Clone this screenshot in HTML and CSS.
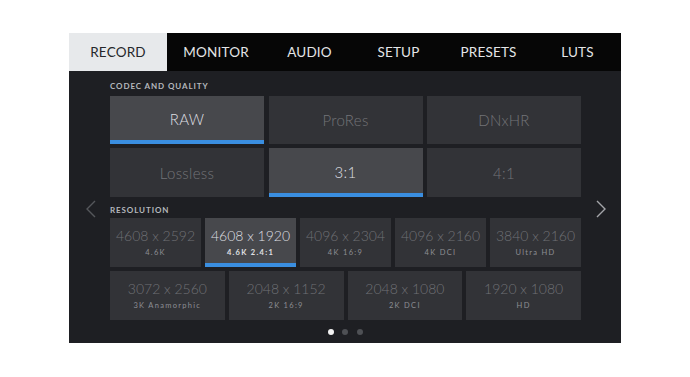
FILE: index.html
```html
<!DOCTYPE html>
<html lang="en">
  <head>
    <meta charset="UTF-8" />
    <meta name="viewport" content="width=device-width, initial-scale=1.0" />
    <title>Record Settings</title>
    <link rel="stylesheet" href="styles.css">
  </head>
  <body>
    <div class="screen">
      <div class="tabs">
        <div class="tab active">RECORD</div>
        <div class="tab">MONITOR</div>
        <div class="tab">AUDIO</div>
        <div class="tab">SETUP</div>
        <div class="tab">PRESETS</div>
        <div class="tab">LUTS</div>
      </div>

      <div class="content">
        <div class="nav nav-left">
          <svg width="11" height="18" viewBox="0 0 11 18"><polyline points="10,1 2,9 10,17" fill="none" stroke="currentColor" stroke-width="1.4"/></svg>
        </div>

        <div class="main">
          <div class="section-label">CODEC AND QUALITY</div>
          <div class="codec-grid">
            <div class="option selected">RAW</div>
            <div class="option">ProRes</div>
            <div class="option">DNxHR</div>
            <div class="option">Lossless</div>
            <div class="option selected">3:1</div>
            <div class="option">4:1</div>
          </div>

          <div class="section-label res-label">RESOLUTION</div>
          <div class="res-grid res-five">
            <div class="res"><span class="res-size">4608 x 2592</span><span class="res-name">4.6K</span></div>
            <div class="res selected"><span class="res-size">4608 x 1920</span><span class="res-name">4.6K 2.4:1</span></div>
            <div class="res"><span class="res-size">4096 x 2304</span><span class="res-name">4K 16:9</span></div>
            <div class="res"><span class="res-size">4096 x 2160</span><span class="res-name">4K DCI</span></div>
            <div class="res"><span class="res-size">3840 x 2160</span><span class="res-name">Ultra HD</span></div>
          </div>
          <div class="res-grid res-four">
            <div class="res"><span class="res-size">3072 x 2560</span><span class="res-name">3K Anamorphic</span></div>
            <div class="res"><span class="res-size">2048 x 1152</span><span class="res-name">2K 16:9</span></div>
            <div class="res"><span class="res-size">2048 x 1080</span><span class="res-name">2K DCI</span></div>
            <div class="res"><span class="res-size">1920 x 1080</span><span class="res-name">HD</span></div>
          </div>

          <div class="dots">
            <span class="dot on"></span>
            <span class="dot"></span>
            <span class="dot"></span>
          </div>
        </div>

        <div class="nav nav-right">
          <svg width="11" height="18" viewBox="0 0 11 18"><polyline points="1,1 9,9 1,17" fill="none" stroke="currentColor" stroke-width="1.4"/></svg>
        </div>
      </div>
    </div>
  </body>
</html>
```

FILE: styles.css
```css
body {
  margin: 0;
  background: #ffffff;
  font-family: Lato, "Open Sans", sans-serif;
}
.screen {
  width: 552px;
  height: 310px;
  margin: 33px 0 0 69px;
  background: #1e1f23;
  display: flex;
  flex-direction: column;
}
.tabs {
  display: grid;
  grid-template-columns: 98px 98px 89px 89px 91px 87px;
  height: 38px;
  background: #060606;
}
.tab {
  display: flex;
  align-items: center;
  justify-content: center;
  color: #e4e5e7;
  font-size: 13.5px;
  letter-spacing: 0.2px;
}
.tab.active {
  background: #e7e9eb;
  color: #25272a;
}
.content {
  flex: 1;
  display: grid;
  grid-template-columns: 41px 471px 40px;
}
.nav {
  display: flex;
  align-items: center;
  justify-content: center;
  padding-top: 3px;
}
.nav-left {
  color: #55575b;
  padding-left: 2px;
}
.nav-right {
  color: #a4a5a9;
}
.main {
  padding-top: 10px;
  display: flex;
  flex-direction: column;
}
.section-label {
  font-size: 8px;
  line-height: 10px;
  font-weight: 700;
  letter-spacing: 0.9px;
  color: #b5b8bd;
  margin-bottom: 4.5px;
}
.res-label {
  margin-top: 8px;
  margin-bottom: 3px;
}
.codec-grid {
  display: grid;
  grid-template-columns: repeat(3, 1fr);
  grid-auto-rows: 48.75px;
  gap: 4px 4.5px;
}
.option {
  display: flex;
  align-items: center;
  justify-content: center;
  background: #323337;
  color: #727378;
  font-size: 15px;
  font-weight: 300;
  letter-spacing: 0.3px;
}
.option.selected,
.res.selected {
  background: #47484c;
  color: #dedfe1;
  border-bottom: 4px solid #3a8ee0;
}
.option.selected {
  padding-top: 3px;
}
.res-grid {
  display: grid;
  gap: 4px;
  height: 48.75px;
}
.res-five {
  grid-template-columns: repeat(5, 1fr);
  margin-bottom: 4.5px;
}
.res-four {
  grid-template-columns: repeat(4, 1fr);
}
.res {
  display: flex;
  flex-direction: column;
  align-items: center;
  justify-content: center;
  background: #323337;
  color: #6f7075;
}
.res.selected {
  padding-top: 4px;
}
.res-size {
  font-size: 14px;
  font-weight: 300;
  line-height: 16px;
}
.res-name {
  margin-top: 4px;
  font-size: 7.5px;
  font-weight: 400;
  letter-spacing: 1.3px;
  line-height: 9px;
  color: #8d8e93;
}
.res.selected .res-name {
  color: #e0e1e3;
  font-weight: 700;
}
.dots {
  display: flex;
  justify-content: center;
  gap: 8.5px;
  margin-top: 9.3px;
  padding-right: 1px;
}
.dot {
  width: 6px;
  height: 6px;
  border-radius: 50%;
  background: #4e5054;
}
.dot.on {
  background: #f2f2f2;
}
```
